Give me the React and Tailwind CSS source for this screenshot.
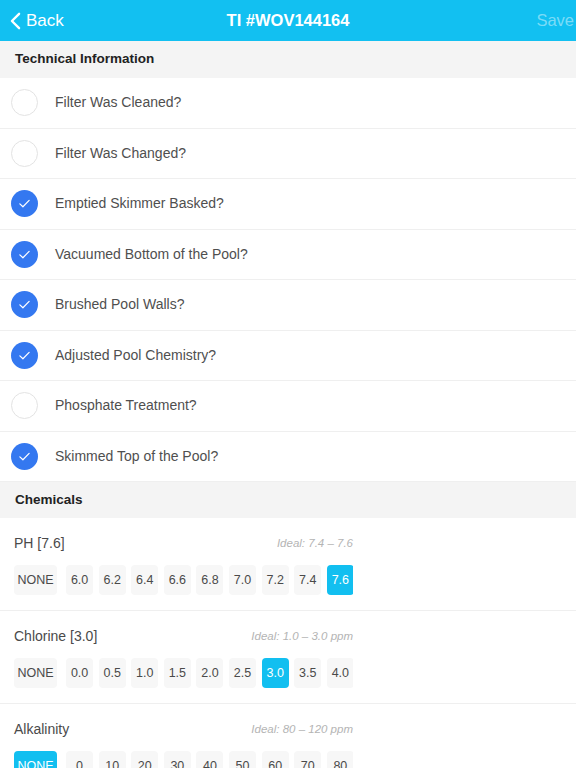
import { useState } from 'react';

const tasks = [
  { label: 'Filter Was Cleaned?', done: false },
  { label: 'Filter Was Changed?', done: false },
  { label: 'Emptied Skimmer Basked?', done: true },
  { label: 'Vacuumed Bottom of the Pool?', done: true },
  { label: 'Brushed Pool Walls?', done: true },
  { label: 'Adjusted Pool Chemistry?', done: true },
  { label: 'Phosphate Treatment?', done: false },
  { label: 'Skimmed Top of the Pool?', done: true },
];

const chemicals = [
  { name: 'PH [7.6]', ideal: 'Ideal: 7.4 – 7.6', options: ['6.0', '6.2', '6.4', '6.6', '6.8', '7.0', '7.2', '7.4', '7.6'], value: '7.6' },
  { name: 'Chlorine [3.0]', ideal: 'Ideal: 1.0 – 3.0 ppm', options: ['0.0', '0.5', '1.0', '1.5', '2.0', '2.5', '3.0', '3.5', '4.0'], value: '3.0' },
  { name: 'Alkalinity', ideal: 'Ideal: 80 – 120 ppm', options: ['0', '10', '20', '30', '40', '50', '60', '70', '80'], value: 'NONE' },
];

function Check({ on }) {
  if (!on) {
    return <div className="w-[27px] h-[27px] rounded-full border border-[#e3e3e3] bg-white" />;
  }
  return (
    <div className="w-[27px] h-[27px] rounded-full bg-[#3478f0] flex items-center justify-center">
      <svg viewBox="0 0 14 14" className="w-[13px] h-[13px]" fill="none" stroke="white" strokeWidth="1.3" strokeLinecap="round" strokeLinejoin="round">
        <path d="M2 7.4l3.3 3.1L12 3.6" />
      </svg>
    </div>
  );
}

function Chip({ label, active, wide }) {
  return (
    <div
      className={`${wide ? 'w-[43px] mr-[3.5px]' : 'w-[27px]'} h-[30px] shrink-0 rounded-[4px] flex items-center justify-center text-[12.5px] ${
        active ? 'bg-[#12bff0] text-white' : 'bg-[#f7f7f7] text-[#4a4a4a]'
      }`}
    >
      {label}
    </div>
  );
}

export default function App() {
  const [items, setItems] = useState(tasks);

  const toggle = (i) => setItems(items.map((t, j) => (j === i ? { ...t, done: !t.done } : t)));

  return (
    <div className="w-[576px] h-[768px] overflow-hidden bg-white" style={{ fontFamily: '"Liberation Sans", Arial, sans-serif' }}>
      <header className="h-[41px] bg-[#12c0f1] flex items-center justify-between text-white relative">
        <button className="flex items-center gap-[5px] pl-[10px] text-[17px]">
          <svg viewBox="0 0 12 20" className="w-[11px] h-[18px]" fill="none" stroke="white" strokeWidth="2.6" strokeLinecap="round" strokeLinejoin="round">
            <path d="M10 2L2 10l8 8" />
          </svg>
          Back
        </button>
        <h1 className="absolute left-0 right-0 text-center font-bold text-[16.5px] pointer-events-none">TI #WOV144164</h1>
        <span className="pr-[2px] text-[16.5px] text-white/45">Save</span>
      </header>

      <div className="h-[37px] bg-[#f4f4f4] flex items-center px-[15px] text-[13.5px] font-semibold text-[#222]">
        Technical Information
      </div>
      {items.map((t, i) => (
        <div
          key={t.label}
          onClick={() => toggle(i)}
          className="h-[50.5px] flex items-center gap-[17px] pl-[11px] border-b border-[#efefef] last:border-b-0"
        >
          <Check on={t.done} />
          <span className="text-[14px] text-[#4f4f4f]">{t.label}</span>
        </div>
      ))}

      <div className="h-[36px] bg-[#f4f4f4] flex items-center px-[15px] text-[13.5px] font-semibold text-[#222]">
        Chemicals
      </div>
      {chemicals.map((c) => (
        <div key={c.name} className="px-[14px] pt-[15px] pb-[15px] border-b border-[#efefef]">
          <div className="w-[339px] flex items-center justify-between mb-[11px]">
            <span className="text-[14px] text-[#4a4a4a]">{c.name}</span>
            <span className="text-[11.5px] italic text-[#b4b4b4]">{c.ideal}</span>
          </div>
          <div className="w-[339px] flex gap-[5.6px] overflow-hidden">
            <Chip label="NONE" wide active={c.value === 'NONE'} />
            {c.options.map((o) => (
              <Chip key={o} label={o} active={c.value === o} />
            ))}
          </div>
        </div>
      ))}
    </div>
  );
}
